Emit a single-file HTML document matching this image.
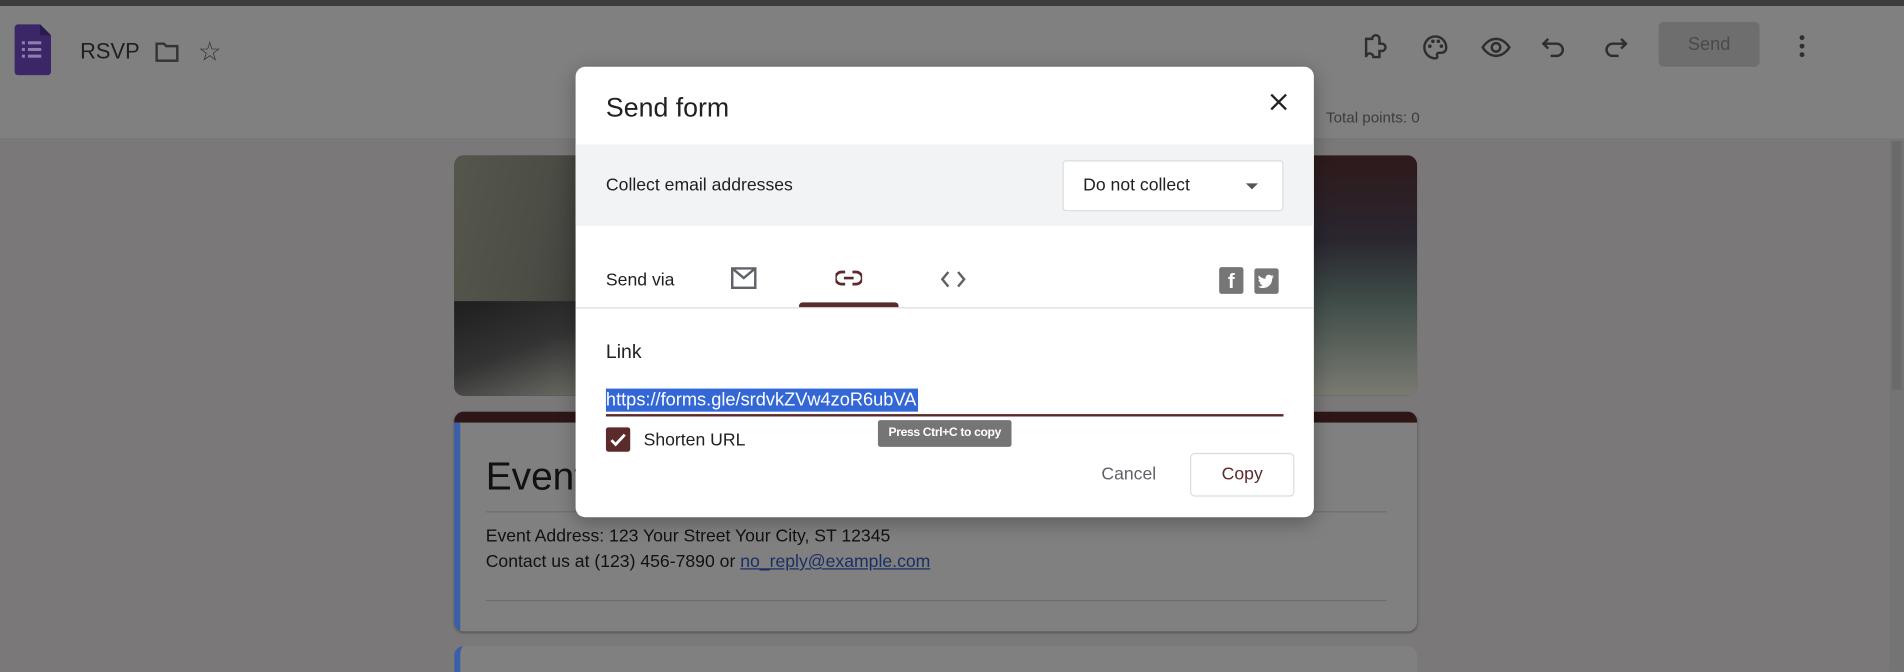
<!DOCTYPE html>
<html><head><meta charset="utf-8"><style>
*{box-sizing:border-box;margin:0;padding:0}
html,body{width:1904px;height:672px;overflow:hidden;background:#7a7878;font-family:"Liberation Sans",Arial,sans-serif}
#s{width:1568px;height:553px;transform:scale(1.2143);transform-origin:0 0;position:relative}
.a{position:absolute}
</style></head><body><div id="s">
<div class="a" style="left:0;top:0;width:1568px;height:5px;background:#3c3c3c"></div>
<div class="a" style="left:0;top:5px;width:1568px;height:110px;background:#808080;border-bottom:1px solid #747474"></div>
<div class="a" style="left:1556px;top:116px;width:12px;height:437px;background:#747474"></div>
<div class="a" style="left:1558px;top:116px;width:8px;height:205px;background:#6a6a6a"></div>
<svg class="a" style="left:12px;top:20px" width="30" height="42" viewBox="0 0 30 42"><path d="M3 0h18l9 9v30a3 3 0 0 1-3 3H3a3 3 0 0 1-3-3V3a3 3 0 0 1 3-3z" fill="#3b2768"/><path d="M21 0l9 9h-9z" fill="#2a1b4d"/><g fill="#8b7fb0"><rect x="6" y="14" width="2.5" height="2.5"/><rect x="6" y="19.5" width="2.5" height="2.5"/><rect x="6" y="25" width="2.5" height="2.5"/><rect x="11" y="14" width="11" height="2.5"/><rect x="11" y="19.5" width="11" height="2.5"/><rect x="11" y="25" width="11" height="2.5"/></g></svg>
<div class="a" style="left:66px;top:32px;font-size:18px;color:#202020">RSVP</div>
<svg class="a" style="left:127px;top:33px" width="22" height="20" viewBox="0 0 22 20"><path d="M2 3h6l2 2h9v12H2z" fill="none" stroke="#333" stroke-width="2"/></svg>
<div class="a" style="left:163px;top:30px;font-size:22px;color:#333">☆</div>
<svg class="a" style="left:1121px;top:27px" width="24" height="24" viewBox="0 0 24 24" fill="none" stroke="#2e2e2e" stroke-width="2"><path d="M4 5h5a3 3 0 0 1 6 0v4h2a3 3 0 0 1 0 6h-2v5H10a3 3 0 0 0-6 0z"/></svg>
<svg class="a" style="left:1170px;top:27px" width="24" height="24" viewBox="0 0 24 24" fill="none" stroke="#2e2e2e" stroke-width="2"><path d="M12 3a9 9 0 0 0 0 18c1.5 0 2-1 1.5-2s0-2.5 1.5-2.5H17a4 4 0 0 0 4-4C21 7 17 3 12 3z"/><g fill="#2e2e2e" stroke="none"><circle cx="7.5" cy="11" r="1.5"/><circle cx="10" cy="7" r="1.5"/><circle cx="14.5" cy="7" r="1.5"/><circle cx="17" cy="11" r="1.5"/></g></svg>
<svg class="a" style="left:1219px;top:27px" width="26" height="24" viewBox="0 0 26 24" fill="none" stroke="#2e2e2e" stroke-width="2"><path d="M2 12s4-7 11-7 11 7 11 7-4 7-11 7S2 12 2 12z"/><circle cx="13" cy="12" r="3.5"/></svg>
<svg class="a" style="left:1269px;top:28px" width="22" height="22" viewBox="0 0 22 22" fill="none" stroke="#2e2e2e" stroke-width="2"><path d="M6 4L2 8l4 4M2 8h11a5 5 0 0 1 0 10H8"/></svg>
<svg class="a" style="left:1319px;top:28px" width="22" height="22" viewBox="0 0 22 22" fill="none" stroke="#2e2e2e" stroke-width="2"><path d="M16 4l4 4-4 4M20 8H9a5 5 0 0 0 0 10h5"/></svg>
<div class="a" style="left:1366px;top:18px;width:83px;height:37px;background:#6e6e6e;border-radius:4px;color:#4a4a4a;font-size:15px;text-align:center;line-height:37px">Send</div>
<div class="a" style="left:1482px;top:29px;width:4px;height:4px;border-radius:2px;background:#2e2e2e;box-shadow:0 7px 0 #2e2e2e,0 14px 0 #2e2e2e"></div>
<div class="a" style="left:1092px;top:90px;font-size:12.5px;color:#3c3c3c">Total points: 0</div>
<div class="a" style="left:374px;top:128px;width:793px;height:198px;border-radius:8px;overflow:hidden;background:#3a3b36">
<div class="a" style="left:0;top:0;width:110px;height:130px;background:linear-gradient(100deg,#55564c 0%,#4c4d45 60%,#3e3f3a 100%)"></div>
<div class="a" style="left:0;top:120px;width:110px;height:78px;background:linear-gradient(160deg,#1e1e1e 0%,#333 50%,#6e6e68 100%)"></div>
<div class="a" style="left:705px;top:0;width:88px;height:198px;background:linear-gradient(180deg,#2e1a1a 0%,#2a2630 35%,#3e4c48 60%,#7a7a72 100%)"></div>
</div>
<div class="a" style="left:374px;top:339px;width:793px;height:181px;border-radius:8px;overflow:hidden;background:#808080;box-shadow:0 1px 2px rgba(0,0,0,.3)">
<div class="a" style="left:0;top:0;width:793px;height:9px;background:#2e1616"></div>
<div class="a" style="left:0;top:9px;width:5px;height:172px;background:#3a5ea8"></div>
<div class="a" style="left:26px;top:35px;font-size:32px;color:#111">Event</div>
<div class="a" style="left:26px;top:82px;width:742px;height:1px;background:#6e6e6e"></div>
<div class="a" style="left:26px;top:93px;font-size:14.5px;color:#111;line-height:21px">Event Address: 123 Your Street Your City, ST 12345<br>Contact us at (123) 456-7890 or <span style="color:#1a2e66;text-decoration:underline">no_reply@example.com</span></div>
<div class="a" style="left:26px;top:155px;width:742px;height:1px;background:#6e6e6e"></div>
</div>
<div class="a" style="left:374px;top:532px;width:793px;height:30px;border-radius:8px;background:#808080;border-left:5px solid #3a5ea8"></div>
<div class="a" style="left:474px;top:55px;width:608px;height:371px;background:#fff;border-radius:8px;overflow:hidden;box-shadow:0 4px 16px rgba(0,0,0,.3)">
<div class="a" style="left:25px;top:21px;font-size:22px;color:#202124">Send form</div>
<svg class="a" style="left:571px;top:21px" width="16" height="16" viewBox="0 0 17 17" stroke="#202124" stroke-width="2"><path d="M2 2l13 13M15 2L2 15"/></svg>
<div class="a" style="left:0;top:64px;width:608px;height:67px;background:#f1f3f4"></div>
<div class="a" style="left:25px;top:90px;font-size:14.5px;color:#202124">Collect email addresses</div>
<div class="a" style="left:401px;top:77px;width:182px;height:42px;background:#fff;border:1px solid #dadce0;border-radius:3px"></div>
<div class="a" style="left:418px;top:90px;font-size:14.5px;color:#202124">Do not collect</div>
<div class="a" style="left:552px;top:96px;width:0;height:0;border-left:5px solid transparent;border-right:5px solid transparent;border-top:5px solid #555"></div>
<div class="a" style="left:25px;top:168px;font-size:14.5px;color:#202124">Send via</div>
<svg class="a" style="left:128px;top:165px" width="21" height="18" viewBox="0 0 21 18" fill="none" stroke="#5f6368" stroke-width="2"><rect x="1" y="1" width="19" height="16"/><path d="M1 1l9.5 8L20 1"/></svg>
<svg class="a" style="left:214px;top:167px" width="22" height="14" viewBox="0 0 22 14" fill="none" stroke="#5b2b2b" stroke-width="2.2"><path d="M8 2H5a5 5 0 0 0 0 10h3M14 2h3a5 5 0 0 1 0 10h-3M7 7h8"/></svg>
<svg class="a" style="left:300px;top:167px" width="22" height="16" viewBox="0 0 22 16" fill="none" stroke="#5f6368" stroke-width="2"><path d="M7 2L2 8l5 6M15 2l5 6-5 6"/></svg>
<div class="a" style="left:184px;top:194px;width:82px;height:4px;background:#5b2b2b;border-radius:3px 3px 0 0"></div>
<div class="a" style="left:0;top:198px;width:608px;height:1px;background:#dadce0"></div>
<div class="a" style="left:530px;top:165px;width:20px;height:22px;background:#767676;border-radius:2px;color:#fff;font-weight:bold;font-size:17px;text-align:center;line-height:24px">f</div>
<div class="a" style="left:559px;top:166px;width:20px;height:21px;background:#767676;border-radius:2px"><svg width="20" height="21" viewBox="0 0 20 21"><path d="M16 6.5c-.5.2-1 .4-1.6.4.6-.3 1-.9 1.2-1.5-.5.3-1.1.5-1.7.7a2.7 2.7 0 0 0-4.6 2.5C7 8.5 5 7.4 3.7 5.8c-.8 1.3-.3 2.9.9 3.7-.4 0-.9-.1-1.2-.3 0 1.3.9 2.4 2.2 2.7-.4.1-.8.1-1.2 0 .3 1.1 1.3 1.9 2.5 1.9A5.4 5.4 0 0 1 3 15c1.2.8 2.6 1.2 4.1 1.2 5 0 7.8-4.2 7.6-8 .5-.4 1-.9 1.3-1.7z" fill="#fff"/></svg></div>
<div class="a" style="left:25px;top:227px;font-size:16px;color:#202124">Link</div>
<div class="a" style="left:25px;top:265px;height:19px;background:#3367d6;color:#fff;font-size:15px;line-height:20px;padding-right:1px">https://forms.gle/srdvkZVw4zoR6ubVA</div>
<div class="a" style="left:25px;top:286px;width:558px;height:2px;background:#5b2b2b"></div>
<div class="a" style="left:25px;top:297px;width:20px;height:20px;background:#5b2b2b;border-radius:2px"><svg width="20" height="20" viewBox="0 0 20 20"><path d="M4.5 10.5l3.5 3.5 7.5-8" fill="none" stroke="#fff" stroke-width="2.3"/></svg></div>
<div class="a" style="left:56px;top:300px;font-size:14.5px;color:#202124">Shorten URL</div>
<div class="a" style="left:249px;top:291px;width:110px;height:22px;background:#757575;border-radius:2px;color:#fff;font-size:10px;font-weight:bold;text-align:center;line-height:22px;letter-spacing:-.3px">Press Ctrl+C to copy</div>
<div class="a" style="left:433px;top:328px;font-size:14.5px;color:#5f6368">Cancel</div>
<div class="a" style="left:506px;top:318px;width:86px;height:36px;border:1px solid #dadce0;border-radius:4px;color:#5b2b2b;font-size:14.5px;text-align:center;line-height:35px">Copy</div>
</div>
</div></body></html>
